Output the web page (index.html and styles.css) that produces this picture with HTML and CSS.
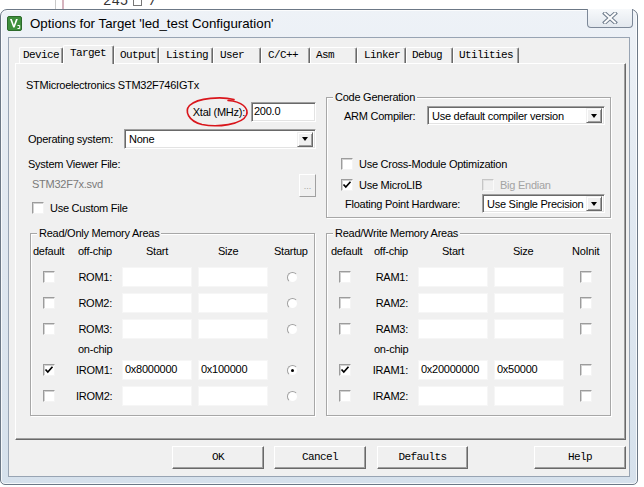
FILE: index.html
```html
<!DOCTYPE html>
<html>
<head>
<meta charset="utf-8">
<title>Options for Target</title>
<link rel="stylesheet" href="styles.css">
</head>
<body>
<div class="desk">
  <div class="code-strip">
    <span class="gutter-a"></span><span class="gutter-b"></span>
    <span class="code-line"><span class="ln">245</span><span class="fold"></span><span class="cm">/**</span></span>
  </div>

  <div class="window">
    <div class="titlebar">
      <svg class="app-icon" width="15" height="15" viewBox="0 0 15 15">
        <rect x="0.5" y="0.5" width="14" height="14" rx="1.5" fill="#3f8f3c" stroke="#2c6a2a"/>
        <path d="M3 3 L6.2 11.5 L7.6 11.5 L10.8 3 L9 3 L6.9 9 L4.8 3 Z" fill="#fff"/>
        <path d="M10.5 9.5 h2.2 v3 h-2.2" fill="none" stroke="#fff" stroke-width="1"/>
      </svg>
      <span class="title">Options for Target 'led_test Configuration'</span>
      <div class="close-btn">
        <svg width="16" height="12" viewBox="0 0 16 12">
          <path d="M3 1.5 L13 10.5 M13 1.5 L3 10.5" stroke="#6f7c8c" stroke-width="4" stroke-linecap="square" fill="none"/>
          <path d="M3 1.5 L13 10.5 M13 1.5 L3 10.5" stroke="#fdfdfd" stroke-width="2" stroke-linecap="square" fill="none"/>
        </svg>
      </div>
    </div>

    <div class="client">
      <div class="tabs">
        <div class="tab tab-first">Device</div>
        <div class="tab active">Target</div>
        <div class="tab">Output</div>
        <div class="tab tab-wide">Listing</div>
        <div class="tab tab-wide">User</div>
        <div class="tab tab-wide">C/C++</div>
        <div class="tab">Asm</div>
        <div class="tab tab-wide">Linker</div>
        <div class="tab">Debug</div>
        <div class="tab">Utilities</div>
      </div>

      <div class="panel">
        <div class="top">
          <div class="leftcol">
            <div class="device">STMicroelectronics STM32F746IGTx</div>
            <div class="xtal-row">
              <span>Xtal (MHz):</span>
              <div class="edit sunken xtal">200.0</div>
            </div>
            <div class="os-row">
              <span class="os-label">Operating system:</span>
              <div class="combo sunken os-combo"><span class="combo-text">None</span><span class="dd"></span></div>
            </div>
            <div class="svf">System Viewer File:</div>
            <div class="svd-row">
              <span class="disabled-text">STM32F7x.svd</span>
              <div class="small-btn">...</div>
            </div>
            <div class="chk-row custom">
              <span class="chk"></span><span>Use Custom File</span>
            </div>
          </div>

          <div class="group codegen">
            <span class="legend">Code Generation</span>
            <div class="arm-row">
              <span class="arm-label">ARM Compiler:</span>
              <div class="combo sunken arm-combo"><span class="combo-text">Use default compiler version</span><span class="dd"></span></div>
            </div>
            <div class="chk-row cross">
              <span class="chk"></span><span>Use Cross-Module Optimization</span>
            </div>
            <div class="micro-row">
              <div class="chk-row micro">
                <span class="chk checked"><svg width="10" height="10" viewBox="0 0 10 10"><path d="M1.5 4.5 L3.8 7 L8.5 1.8" stroke="#000" stroke-width="1.7" fill="none"/></svg></span><span>Use MicroLIB</span>
              </div>
              <div class="chk-row endian">
                <span class="chk disabled"></span><span class="gray-text">Big Endian</span>
              </div>
            </div>
            <div class="fp-row">
              <span class="fp-label">Floating Point Hardware:</span>
              <div class="combo sunken fp-combo"><span class="combo-text">Use Single Precision</span><span class="dd"></span></div>
            </div>
          </div>
        </div>

        <div class="bottom">
          <div class="group mem ro">
            <span class="legend">Read/Only Memory Areas</span>
            <div class="mem-grid">
              <span class="h h-default">default</span>
              <span class="h h-off">off-chip</span>
              <span class="h h-start">Start</span>
              <span class="h h-size">Size</span>
              <span class="h h-last">Startup</span>

              <span class="chk cell-chk"></span><span class="mlabel">ROM1:</span><span class="medit"></span><span class="medit"></span><span class="radio"></span>
              <span class="chk cell-chk"></span><span class="mlabel">ROM2:</span><span class="medit"></span><span class="medit"></span><span class="radio"></span>
              <span class="chk cell-chk"></span><span class="mlabel">ROM3:</span><span class="medit"></span><span class="medit"></span><span class="radio"></span>

              <span class="onchip">on-chip</span>

              <span class="chk cell-chk checked"><svg width="10" height="10" viewBox="0 0 10 10"><path d="M1.5 4.5 L3.8 7 L8.5 1.8" stroke="#000" stroke-width="1.7" fill="none"/></svg></span><span class="mlabel">IROM1:</span><span class="medit">0x8000000</span><span class="medit">0x100000</span><span class="radio on"></span>
              <span class="chk cell-chk"></span><span class="mlabel">IROM2:</span><span class="medit"></span><span class="medit"></span><span class="radio"></span>
            </div>
          </div>

          <div class="group mem rw">
            <span class="legend">Read/Write Memory Areas</span>
            <div class="mem-grid">
              <span class="h h-default">default</span>
              <span class="h h-off">off-chip</span>
              <span class="h h-start">Start</span>
              <span class="h h-size">Size</span>
              <span class="h h-last">NoInit</span>

              <span class="chk cell-chk"></span><span class="mlabel">RAM1:</span><span class="medit"></span><span class="medit"></span><span class="chk last-chk"></span>
              <span class="chk cell-chk"></span><span class="mlabel">RAM2:</span><span class="medit"></span><span class="medit"></span><span class="chk last-chk"></span>
              <span class="chk cell-chk"></span><span class="mlabel">RAM3:</span><span class="medit"></span><span class="medit"></span><span class="chk last-chk"></span>

              <span class="onchip">on-chip</span>

              <span class="chk cell-chk checked"><svg width="10" height="10" viewBox="0 0 10 10"><path d="M1.5 4.5 L3.8 7 L8.5 1.8" stroke="#000" stroke-width="1.7" fill="none"/></svg></span><span class="mlabel">IRAM1:</span><span class="medit">0x20000000</span><span class="medit">0x50000</span><span class="chk last-chk"></span>
              <span class="chk cell-chk"></span><span class="mlabel">IRAM2:</span><span class="medit"></span><span class="medit"></span><span class="chk last-chk"></span>
            </div>
          </div>
        </div>

        <svg class="ring" width="66" height="32" viewBox="0 0 66 32">
          <path d="M50 3.5 C38 0.5 14 1.5 5.5 9.5 C0.5 15 4 25 18 28.5 C33 31.5 58 29 62.5 19 C65 12 58 5.5 44 4.5" fill="none" stroke="#d9161c" stroke-width="1.6" stroke-linecap="round"/>
        </svg>
      </div>

      <div class="buttons">
        <div class="btn">OK</div>
        <div class="btn">Cancel</div>
        <div class="btn btn-defaults">Defaults</div>
        <div class="btn btn-help">Help</div>
      </div>
    </div>
  </div>
</div>
</body>
</html>
```

FILE: styles.css
```css
* { box-sizing: border-box; }

html, body {
  margin: 0;
  padding: 0;
}

body {
  width: 644px;
  height: 487px;
  overflow: hidden;
  background: #ffffff;
}

.desk {
  position: relative;
  width: 644px;
  height: 487px;
  overflow: hidden;
  background: #ffffff;
}

/* editor behind the dialog */
.code-strip {
  position: absolute;
  left: 0;
  top: 0;
  width: 644px;
  height: 12px;
}
.gutter-a {
  position: absolute;
  left: 55px;
  top: 0;
  width: 1px;
  height: 12px;
  background: #c9c9c9;
}
.gutter-b {
  position: absolute;
  left: 62px;
  top: 0;
  width: 2px;
  height: 12px;
  background: #d6b4bf;
}
.code-line {
  position: absolute;
  left: 103px;
  top: -6px;
  font-family: "Liberation Mono", monospace;
  font-size: 14px;
  line-height: 14px;
  color: #333;
  white-space: pre;
  display: flex;
  align-items: center;
}
.fold {
  display: inline-block;
  width: 9px;
  height: 9px;
  border: 1px solid #777;
  margin: 0 7px 0 5px;
}

/* window */
.window {
  position: absolute;
  left: 0;
  top: 9px;
  width: 638px;
  height: 476px;
  border: 1px solid #6c7886;
  border-radius: 7px 7px 5px 5px;
  padding: 0 7px 7px 7px;
  background: linear-gradient(to bottom, #eef2f7 0%, #e2e9f1 40%, #d6e1ec 100%);
  box-shadow: inset 0 0 0 1px rgba(255, 255, 255, 0.75);
  display: flex;
  flex-direction: column;
}

.titlebar {
  height: 27px;
  margin: 0 -7px;
  padding-left: 6px;
  display: flex;
  align-items: flex-start;
}
.app-icon {
  margin-top: 6px;
  flex: none;
}
.title {
  margin-left: 8px;
  margin-top: 5px;
  font-family: "Liberation Sans", Arial, sans-serif;
  font-size: 13.3px;
  line-height: 17px;
  color: #000;
  white-space: nowrap;
}
.close-btn {
  margin-left: auto;
  margin-right: 4px;
  margin-top: -1px;
  width: 46px;
  height: 19px;
  border: 1px solid #7d8898;
  border-top: none;
  border-radius: 0 0 4px 4px;
  background: linear-gradient(to bottom, #f7f9fb, #e3e8ee);
  display: flex;
  align-items: center;
  justify-content: center;
}

.client {
  flex: 1;
  border: 1px solid #98a4b3;
  background: #f0f0f0;
  padding: 7px 0 0 10px;
  font-family: "Liberation Sans", Arial, sans-serif;
  font-size: 11px;
  letter-spacing: -0.25px;
  color: #000;
  display: flex;
  flex-direction: column;
}

/* tabs */
.tabs {
  height: 18px;
  display: grid;
  grid-template-columns: 44px 51px 45px 54px 48px 49px 47px 49px 47px 66px;
  align-items: end;
  position: relative;
  z-index: 2;
}
.tab {
  height: 16px;
  border-top: 1px solid #ffffff;
  border-left: 1px solid #ffffff;
  border-right: 1px solid #696969;
  box-shadow: inset -1px 0 0 #a0a0a0;
  border-radius: 2px 2px 0 0;
  padding-left: 5px;
  font-family: "Liberation Mono", monospace;
  font-size: 11px;
  letter-spacing: -0.6px;
  line-height: 15px;
  white-space: nowrap;
  overflow: hidden;
}
.tab-first { padding-left: 3px; }
.tab-wide { padding-left: 6px; }
.tab.active {
  height: 19px;
  margin-bottom: -1px;
  background: #f0f0f0;
  padding-left: 6px;
  line-height: 15px;
}

.panel {
  position: relative;
  margin-left: -4px;
  width: 611px;
  height: 377px;
  border: 1px solid;
  border-color: #ffffff #696969 #696969 #ffffff;
  box-shadow: inset -1px -1px 0 #a0a0a0;
  padding: 15px 0 0 10px;
}

.top {
  display: flex;
  align-items: flex-start;
}

.leftcol {
  width: 290px;
  flex: none;
}
.device {
  line-height: 12px;
  height: 12px;
  white-space: nowrap;
}
.xtal-row {
  margin-top: 11px;
  height: 20px;
  display: flex;
  justify-content: flex-end;
  align-items: center;
  gap: 6px;
}
.sunken {
  background: #ffffff;
  border: 1px solid;
  border-color: #a0a0a0 #ffffff #ffffff #a0a0a0;
  box-shadow: inset 1px 1px 0 #696969, inset -1px -1px 0 #e3e3e3;
}
.edit {
  height: 20px;
  padding: 2px 0 0 2px;
  line-height: 13px;
}
.xtal { width: 65px; }

.os-row {
  margin-top: 7px;
  height: 20px;
  display: flex;
  align-items: center;
  padding-left: 2px;
}
.os-label { width: 96px; }
.combo {
  height: 19px;
  display: flex;
  align-items: center;
  padding: 0 2px 0 4px;
  white-space: nowrap;
}
.combo-text { flex: 1; overflow: hidden; }
.os-combo { width: 192px; height: 20px; }
.dd {
  width: 16px;
  height: 15px;
  flex: none;
  background: #f0f0f0;
  border: 1px solid;
  border-color: #f0f0f0 #696969 #696969 #f0f0f0;
  box-shadow: inset 1px 1px 0 #ffffff, inset -1px -1px 0 #a0a0a0;
  display: flex;
  align-items: center;
  justify-content: center;
}
.dd::after {
  content: "";
  width: 0;
  height: 0;
  border-left: 3.5px solid transparent;
  border-right: 3.5px solid transparent;
  border-top: 4px solid #000;
}

.svf {
  margin-top: 9px;
  padding-left: 2px;
  line-height: 12px;
}
.svd-row {
  margin-top: 4px;
  height: 23px;
  display: flex;
  align-items: center;
  justify-content: space-between;
  padding-left: 6px;
}
.disabled-text {
  color: #7a7a7a;
  padding-bottom: 4px;
}
.small-btn {
  width: 17px;
  height: 23px;
  background: #f0f0f0;
  border: 1px solid;
  border-color: #ffffff #a0a0a0 #a0a0a0 #ffffff;
  color: #a0a0a0;
  font-size: 9px;
  line-height: 22px;
  text-align: center;
  letter-spacing: 0;
}

.chk-row {
  display: flex;
  align-items: center;
  height: 13px;
  white-space: nowrap;
}
.chk-row .chk { margin-right: 6px; }
.custom {
  margin-top: 4px;
  padding-left: 6px;
}

.chk {
  width: 12px;
  height: 12px;
  flex: none;
  display: inline-flex;
  align-items: center;
  justify-content: center;
  background: #ffffff;
  border: 1px solid;
  border-color: #9c9c9c #f4f4f4 #f4f4f4 #9c9c9c;
  box-shadow: inset 1px 1px 0 #d2d2d2;
}
.chk.disabled {
  background: #f0f0f0;
  border-color: #c6c6c6 #fafafa #fafafa #c6c6c6;
  box-shadow: inset 1px 1px 0 #e2e2e2;
}
.chk svg { display: block; }

/* group boxes */
.group {
  position: relative;
  border: 1px solid #a7a7a7;
  box-shadow: inset 1px 1px 0 #ffffff, 1px 1px 0 #ffffff;
}
.legend {
  position: absolute;
  top: -7px;
  left: 6px;
  padding: 0 2px;
  background: #f0f0f0;
  line-height: 13px;
  white-space: nowrap;
}

.codegen {
  margin-left: 10px;
  margin-top: 18px;
  width: 285px;
  height: 121px;
}
.arm-row {
  margin-top: 8px;
  padding-left: 17px;
  display: flex;
  align-items: center;
  height: 19px;
}
.arm-label { width: 83px; }
.arm-combo { width: 178px; }
.cross {
  margin-top: 32px;
  padding-left: 14px;
}
.micro-row {
  margin-top: 8px;
  display: flex;
  height: 13px;
}
.micro {
  padding-left: 14px;
  width: 155px;
}
.gray-text { color: #a3a3a3; }
.fp-row {
  margin-top: 3px;
  padding-left: 18px;
  display: flex;
  align-items: center;
  height: 19px;
}
.fp-label { width: 137px; }
.fp-combo { width: 123px; }

/* memory areas */
.bottom {
  margin-top: 15px;
  margin-left: 4px;
  display: flex;
  gap: 11px;
}
.mem {
  width: 285px;
  height: 183px;
  padding-top: 11px;
}
.mem-grid {
  display: grid;
  grid-template-columns: 45px 46px 76px 76px 1fr;
  grid-template-rows: 16px 20px 20px 20px 9px 20px 20px;
  row-gap: 6px;
  align-items: center;
}
.h {
  align-self: start;
  line-height: 13px;
  white-space: nowrap;
}
.h-default { padding-left: 2px; }
.rw .h-default { padding-left: 4px; }
.h-off { padding-left: 2px; }
.h-start { padding-left: 24px; }
.h-size { padding-left: 20px; }
.rw .h-size { padding-left: 19px; }
.rw .h-last { padding-left: 2px; }

.cell-chk { margin-left: 12px; }
.mlabel {
  text-align: right;
  padding-right: 10px;
  white-space: nowrap;
}
.medit {
  width: 70px;
  height: 20px;
  background: #ffffff;
  border: 1px solid #f6f6f6;
  padding: 1px 0 0 2px;
  line-height: 14px;
  white-space: nowrap;
}
.onchip {
  grid-column: 2 / span 2;
  padding-left: 2px;
  line-height: 9px;
  white-space: nowrap;
}
.onchip + .chk { grid-column: 1; }
.radio {
  width: 11px;
  height: 11px;
  margin-left: 13px;
  border-radius: 50%;
  background: #ffffff;
  border: 1px solid;
  border-color: #a0a0a0 #f0f0f0 #f0f0f0 #a0a0a0;
  position: relative;
}
.radio.on::after {
  content: "";
  position: absolute;
  left: 3px;
  top: 3px;
  width: 3px;
  height: 3px;
  border-radius: 50%;
  background: #000;
}
.last-chk { margin-left: 10px; }

.ring {
  position: absolute;
  left: 168px;
  top: 32px;
}

/* bottom buttons */
.buttons {
  margin-top: 6px;
  height: 23px;
  display: flex;
  padding-left: 153px;
  padding-right: 3px;
  gap: 10px;
}
.btn {
  width: 92px;
  height: 23px;
  background: #f0f0f0;
  border: 1px solid;
  border-color: #ffffff #696969 #696969 #ffffff;
  box-shadow: inset -1px -1px 0 #a0a0a0;
  font-family: "Liberation Mono", monospace;
  font-size: 11px;
  letter-spacing: -0.6px;
  line-height: 21px;
  text-align: center;
}
.btn-defaults { margin-left: 1px; width: 91px; }
.btn-help { margin-left: auto; }
```
